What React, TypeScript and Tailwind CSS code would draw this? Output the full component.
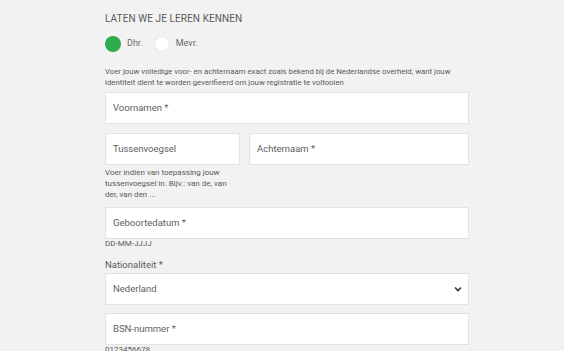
import React from "react";

const inputCls =
  "h-[32px] w-full bg-white border border-[#e3e3e3] px-[7px] flex items-center text-[9.5px] text-[#5e5e5e]";

export default function App() {
  return (
    <div
      className="w-[564px] h-[351px] overflow-hidden bg-[#f2f2f2]"
      style={{ fontFamily: "Roboto, 'Liberation Sans', sans-serif" }}
    >
      <div className="ml-[105px] w-[364px] pt-[13px]">
        <div className="text-[10px] leading-[12px] text-[#5a5a5a] tracking-[0.1px]">LATEN WE JE LEREN KENNEN</div>
        <div className="mt-[11px] flex items-center h-[16px]">
          <span className="w-[16px] h-[16px] rounded-full bg-[#2eab4a]" />
          <span className="ml-[6px] text-[9px] text-[#6a6a6a]">Dhr.</span>
          <span className="ml-[11px] w-[16px] h-[16px] rounded-full bg-white border border-[#e6e6e6]" />
          <span className="ml-[6px] text-[9px] text-[#6a6a6a]">Mevr.</span>
        </div>
        <div className="mt-[14px] text-[7.8px] leading-[11px] text-[#5a5a5a]">
          Voer jouw volledige voor- en achternaam exact zoals bekend bij de Nederlandse overheid, want jouw
          identiteit dient te worden geverifieerd om jouw registratie te voltooien
        </div>
        <div className={"mt-[4px] " + inputCls}>Voornamen *</div>
        <div className="mt-[9px] flex gap-[9px]">
          <div className="w-[135px]">
            <div className={inputCls + " h-[31px]"}>Tussenvoegsel</div>
            <div className="mt-[2px] w-[128px] text-[8px] leading-[11px] text-[#5a5a5a]">
              Voer indien van toepassing jouw tussenvoegsel in. Bijv.: van de, van der, van den ...
            </div>
          </div>
          <div className="flex-1">
            <div className={inputCls + " h-[31px]"}>Achternaam *</div>
          </div>
        </div>
        <div className={"mt-[7px] " + inputCls}>Geboortedatum *</div>
        <div className="text-[8px] leading-[10px] text-[#5a5a5a]">DD-MM-JJJJ</div>
        <div className="mt-[10px] text-[9.5px] leading-[12px] text-[#5a5a5a]">Nationaliteit *</div>
        <div className={"mt-[2px] justify-between " + inputCls + " text-[#2a2a2a]"}>
          <span>Nederland</span>
          <svg width="8" height="6" viewBox="0 0 8 6" className="mr-[-1px]">
            <path d="M1 1.5 L4 4.5 L7 1.5" stroke="#333" strokeWidth="1.6" fill="none" />
          </svg>
        </div>
        <div className={"mt-[8px] " + inputCls}>BSN-nummer *</div>
        <div className="text-[8px] leading-[10px] text-[#5a5a5a]">0123456678</div>
      </div>
    </div>
  );
}
